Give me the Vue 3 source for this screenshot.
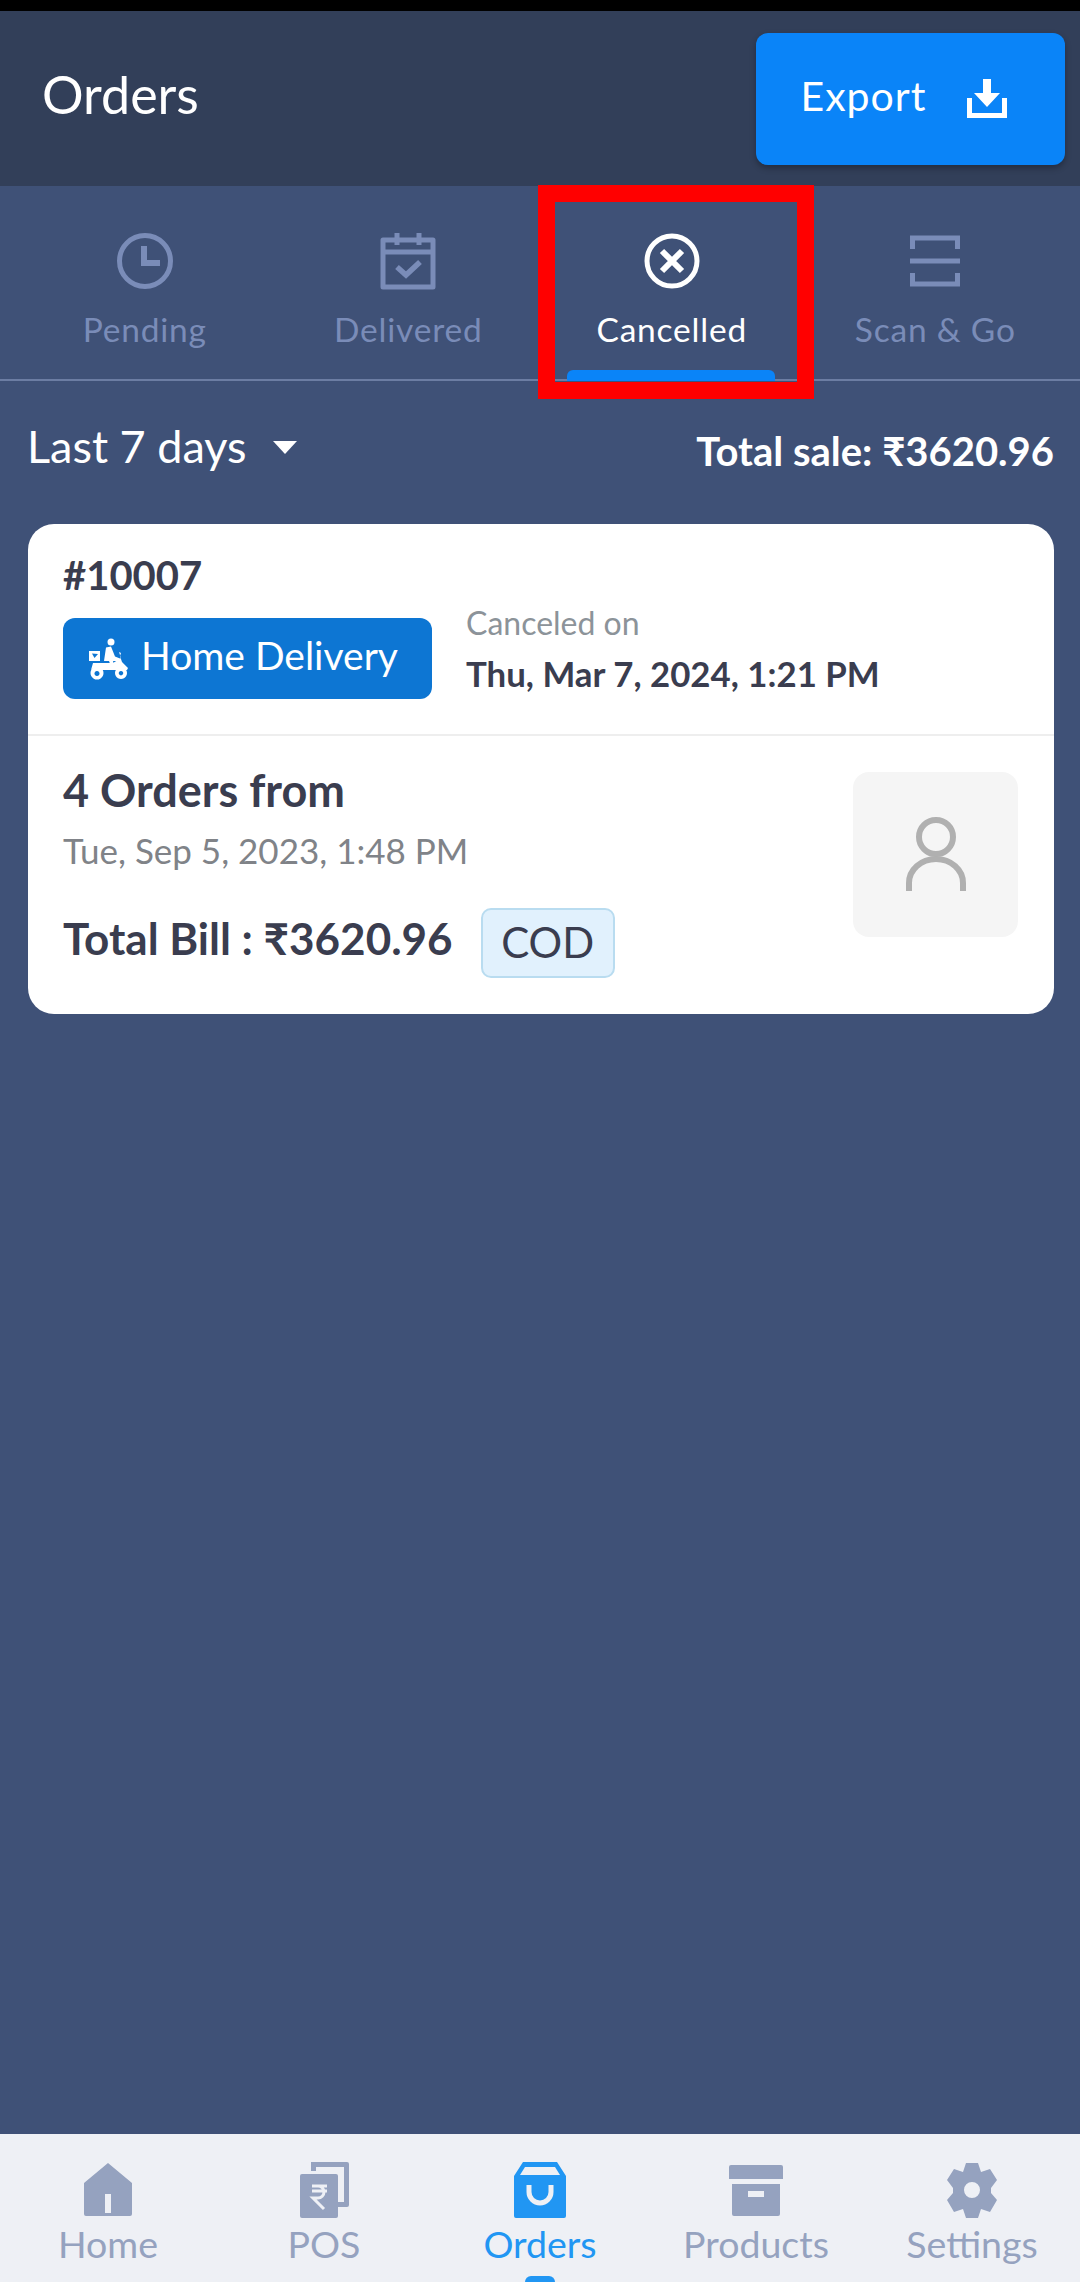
<script setup>
const tabs = [
  { key: 'pending', label: 'Pending' },
  { key: 'delivered', label: 'Delivered' },
  { key: 'cancelled', label: 'Cancelled', active: true },
  { key: 'scan', label: 'Scan & Go' }
]

const navItems = [
  { key: 'home', label: 'Home' },
  { key: 'pos', label: 'POS' },
  { key: 'orders', label: 'Orders', active: true },
  { key: 'products', label: 'Products' },
  { key: 'settings', label: 'Settings' }
]
</script>

<template>
  <div class="page">
    <div class="status-bar"></div>

    <header class="top-bar">
      <h1 class="title">Orders</h1>
      <button class="export-btn">
        <span class="export-text">Export</span>
        <svg width="46" height="42" viewBox="0 0 46 42" fill="#fff">
          <path d="M19 1h8v14h9L23 29 10 15h9z" />
          <path d="M3 20h5v15h30V20h5v20H3z" />
        </svg>
      </button>
    </header>

    <nav class="tabs">
      <div v-for="tab in tabs" :key="tab.key" class="tab" :class="{ active: tab.active }">
        <svg class="tab-icon" width="60" height="60" viewBox="0 0 60 60" fill="none" stroke="currentColor" stroke-width="5">
          <template v-if="tab.key === 'pending'">
            <circle cx="30" cy="30" r="25.5" />
            <path d="M29 15v17h16" stroke-width="6" />
          </template>
          <template v-else-if="tab.key === 'delivered'">
            <path d="M5 9h50v47H5z" stroke-linejoin="round" />
            <path d="M5 21h50" />
            <path d="M19 2v12M41 2v12" />
            <path d="M19 36l9 8 14-13" stroke-width="5.5" />
          </template>
          <template v-else-if="tab.key === 'cancelled'">
            <circle cx="30" cy="30" r="25" />
            <path d="M20 20l20 20M40 20L20 40" stroke-width="6" />
          </template>
          <template v-else>
            <path d="M7.500 18V7h45v11M7.500 42v11h45V42" />
            <path d="M5 30h50" />
          </template>
        </svg>
        <span class="tab-label">{{ tab.label }}</span>
        <span v-if="tab.active" class="tab-line"></span>
      </div>
      <!-- highlight box drawn over the screenshot -->
      <div class="highlight"></div>
    </nav>

    <main class="content">
      <div class="filter-row">
        <div class="range">
          <span>Last 7 days</span>
          <span class="caret"></span>
        </div>
        <div class="total-sale">Total sale: ₹3620.96</div>
      </div>

      <section class="order-card">
        <div class="card-top">
          <div class="order-id">#10007</div>
          <div class="top-row">
            <div class="delivery-badge">
              <svg width="42" height="42" viewBox="0 0 42 42" fill="#fff">
                <circle cx="24" cy="4" r="3.500" />
                <path d="M19 9.500l5-1 4 10 5 2v2.500h-7l2 8h-3l-3-8h-5z" />
                <path d="M2 13h11v10H2z" />
                <path d="M32 14l2 1-1 3 2 6 6 6-1 2H15a7 7 0 0 0-11 0l2-7h20l8-5z" />
                <path d="M10 28.500a6.500 6.500 0 1 0 .01 0zM10 33a2.500 2.500 0 1 1-.01 0z" fill-rule="evenodd" />
                <path d="M34 29a6 6 0 1 0 .01 0zM34 33a2.200 2.200 0 1 1-.01 0z" fill-rule="evenodd" />
                <path d="M5 15.500l6 .5-3.500 4z" fill="#0d76d3" />
              </svg>
              <span class="badge-text">Home Delivery</span>
            </div>
            <div class="cancel-info">
              <div class="cancel-label">Canceled on</div>
              <div class="cancel-date">Thu, Mar 7, 2024, 1:21 PM</div>
            </div>
          </div>
        </div>

        <div class="card-bottom">
          <div class="order-info">
            <div class="order-count">4 Orders from</div>
            <div class="order-date">Tue, Sep 5, 2023, 1:48 PM</div>
            <div class="bill-row">
              <span class="bill">Total Bill : ₹3620.96</span>
              <span class="cod"><span class="cod-text">COD</span></span>
            </div>
          </div>
          <div class="avatar">
            <svg width="60" height="76" viewBox="0 0 60 76" fill="none" stroke="#b0b0b0" stroke-width="6">
              <circle cx="30" cy="20" r="17" />
              <path d="M3 74V66a27 24 0 0 1 54 0v8" />
            </svg>
          </div>
        </div>
      </section>
    </main>

    <footer class="bottom-nav">
      <div v-for="item in navItems" :key="item.key" class="nav-item" :class="{ active: item.active }">
        <svg class="nav-icon" width="60" height="60" viewBox="0 0 60 60" fill="currentColor">
          <path v-if="item.key === 'home'" fill-rule="evenodd" d="M30 3L54 23v31a2 2 0 0 1-2 2H8a2 2 0 0 1-2-2V23zM27 34v19h6V34z" />
          <template v-else-if="item.key === 'pos'">
            <path d="M17 2h36a2 2 0 0 1 2 2v41a2 2 0 0 1-2 2h-9v-5h6V7H22v4h-5z" />
            <path fill-rule="evenodd" d="M8 14h34a2 2 0 0 1 2 2v40a2 2 0 0 1-2 2H8a2 2 0 0 1-2-2V16a2 2 0 0 1 2-2z" />
            <path d="M18 26h15M18 31h15M18 26h6a6 6 0 0 1 0 12h-5l11 11" fill="none" stroke="#eef0f5" stroke-width="3" />
          </template>
          <template v-else-if="item.key === 'orders'">
            <path fill-rule="evenodd" d="M13 2h34l9 14v40a2 2 0 0 1-2 2H6a2 2 0 0 1-2-2V16zM15 7l-5 8h40l-5-8z" />
            <path d="M19 25v7a11 11 0 0 0 22 0v-7" fill="none" stroke="#eef0f5" stroke-width="5" />
          </template>
          <template v-else-if="item.key === 'products'">
            <path d="M5 5h50a2 2 0 0 1 2 2v12H3V7a2 2 0 0 1 2-2z" />
            <path fill-rule="evenodd" d="M6 24h48v30a2 2 0 0 1-2 2H8a2 2 0 0 1-2-2zM22 31v6h16v-6z" />
          </template>
          <path v-else fill-rule="evenodd" d="M24 3h12l3 9 9-3 7 11-6 8v5l6 7-7 12-9-3-3 9H24l-3-9-9 3-7-12 6-7v-5l-6-8 7-11 9 3zM30 22a8 8 0 1 0 0 16 8 8 0 0 0 0-16z" />
        </svg>
        <span class="nav-label">{{ item.label }}</span>
        <span v-if="item.active" class="nav-dot"></span>
      </div>
    </footer>
  </div>
</template>

<style>
html,
body {
  margin: 0;
  background: #3f5177;
}
</style>

<style scoped>
.page {
  position: relative;
  display: flex;
  flex-direction: column;
  width: 1080px;
  height: 2282px;
  overflow: hidden;
  background: #3f5177;
  font-family: Lato, "Noto Sans", sans-serif;
}

.status-bar {
  height: 11px;
  background: #000;
}

.top-bar {
  display: flex;
  align-items: flex-start;
  justify-content: space-between;
  height: 175px;
  box-sizing: border-box;
  padding: 22px 15px 0 42px;
  background: #323f59;
}

.title {
  margin: 31px 0 0;
  font-size: 52px;
  font-weight: 400;
  line-height: 60px;
  color: #fff;
}

.export-btn {
  display: flex;
  align-items: center;
  justify-content: center;
  gap: 38px;
  width: 309px;
  height: 132px;
  border: none;
  border-radius: 12px;
  padding: 0 10px 0 0;
  background: #0a84f8;
  box-shadow: 0 3px 6px rgba(0, 0, 0, 0.3);
  font-family: inherit;
  font-size: 41px;
  letter-spacing: 1px;
  color: #fff;
}

.export-text {
  margin-bottom: 8px;
}

.tabs {
  position: relative;
  display: grid;
  grid-template-columns: repeat(4, 1fr);
  height: 195px;
  box-sizing: border-box;
  padding: 0 13px;
  border-bottom: 2px solid #6c7da3;
}

.tab {
  position: relative;
  display: flex;
  flex-direction: column;
  align-items: center;
  padding-top: 45px;
  color: #7a8cb8;
}

.tab.active {
  color: #fff;
}

.tab-label {
  margin-top: 17px;
  font-size: 33.5px;
  line-height: 42px;
  letter-spacing: 0.8px;
}

.tab-line {
  position: absolute;
  bottom: -2px;
  left: 27px;
  width: 208px;
  height: 11px;
  border-radius: 6px 6px 0 0;
  background: #0a84f8;
}

.highlight {
  position: absolute;
  top: -1px;
  left: 538px;
  width: 276px;
  height: 214px;
  box-sizing: border-box;
  border: 17px solid #ff0000;
}

.content {
  flex: 1;
  padding: 0 26px 0 28px;
}

.filter-row {
  display: flex;
  align-items: center;
  justify-content: space-between;
  height: 143px;
}

.range {
  display: flex;
  align-items: center;
  gap: 26px;
  margin-bottom: 14px;
  margin-left: -1px;
  font-size: 45px;
  color: #fff;
}

.caret {
  width: 0;
  height: 0;
  margin-top: 4px;
  border-left: 12px solid transparent;
  border-right: 12px solid transparent;
  border-top: 13px solid #fff;
}

.total-sale {
  margin-top: -4px;
  font-size: 40px;
  font-weight: 700;
  color: #fff;
}

.order-card {
  border-radius: 26px;
  background: #fff;
  color: #3a3d4f;
}

.card-top {
  height: 212px;
  box-sizing: border-box;
  padding: 28px 35px 0;
  border-bottom: 2px solid #eeeeee;
}

.order-id {
  font-size: 40px;
  font-weight: 700;
  line-height: 46px;
}

.top-row {
  display: flex;
  gap: 34px;
  margin-top: 20px;
}

.delivery-badge {
  display: flex;
  align-items: center;
  gap: 12px;
  width: 369px;
  height: 81px;
  box-sizing: border-box;
  padding-left: 24px;
  border-radius: 12px;
  background: #0d76d3;
  font-size: 39px;
  color: #fff;
}

.badge-text {
  margin-bottom: 8px;
}

.cancel-info {
  margin-top: -12px;
}

.cancel-label {
  font-size: 32px;
  line-height: 34px;
  color: #8c9399;
}

.cancel-date {
  margin-top: 14px;
  font-size: 34.8px;
  font-weight: 700;
  line-height: 40px;
}

.card-bottom {
  display: flex;
  justify-content: space-between;
  height: 278px;
  box-sizing: border-box;
  padding: 36px 36px 0 35px;
}

.order-count {
  font-size: 45px;
  font-weight: 700;
  line-height: 36px;
}

.order-date {
  margin-top: 22px;
  font-size: 35px;
  line-height: 40px;
  color: #808388;
}

.bill-row {
  display: flex;
  align-items: center;
  gap: 28px;
  margin-top: 38px;
}

.bill {
  margin-bottom: 11px;
  font-size: 44px;
  font-weight: 700;
}

.cod {
  display: flex;
  align-items: center;
  justify-content: center;
  width: 134px;
  height: 70px;
  box-sizing: border-box;
  border: 2px solid #b9dcf0;
  border-radius: 10px;
  background: #e1f1fd;
  font-size: 42px;
}

.cod-text {
  margin-bottom: 3px;
}

.avatar {
  display: flex;
  align-items: center;
  justify-content: center;
  width: 165px;
  height: 165px;
  border-radius: 16px;
  background: #f5f5f5;
}

.bottom-nav {
  display: grid;
  grid-template-columns: repeat(5, 1fr);
  height: 148px;
  background: #eef0f5;
}

.nav-item {
  position: relative;
  display: flex;
  flex-direction: column;
  align-items: center;
  padding-top: 26px;
  color: #95a2bf;
}

.nav-item.active {
  color: #2196f3;
}

.nav-label {
  margin-top: 1px;
  font-size: 37.5px;
  line-height: 46px;
}

.nav-dot {
  position: absolute;
  bottom: -8px;
  left: 93px;
  width: 30px;
  height: 14px;
  border-radius: 6px;
  background: #2196f3;
}
</style>
